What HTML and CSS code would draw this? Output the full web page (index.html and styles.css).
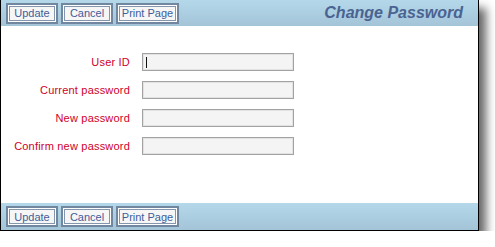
FILE: index.html
```html
<!DOCTYPE html>
<html lang="en">
<head>
  <title>Change Password</title>
  <meta charset="UTF-8">
  <link rel="stylesheet" href="styles.css">
</head>
<body>
<div class="window">
  <div class="bar top">
    <div class="buttons">
      <button class="btn">Update</button>
      <button class="btn">Cancel</button>
      <button class="btn wide">Print Page</button>
    </div>
    <h1 class="title">Change Password</h1>
  </div>

  <form class="form">
    <label class="row">
      <span class="label">User ID</span>
      <input class="field focused" type="text">
    </label>
    <label class="row">
      <span class="label">Current password</span>
      <input class="field" type="password">
    </label>
    <label class="row">
      <span class="label">New password</span>
      <input class="field" type="password">
    </label>
    <label class="row">
      <span class="label">Confirm new password</span>
      <input class="field" type="password">
    </label>
  </form>

  <div class="bar bottom">
    <div class="buttons">
      <button class="btn">Update</button>
      <button class="btn">Cancel</button>
      <button class="btn wide">Print Page</button>
    </div>
  </div>
</div>
</body>
</html>
```

FILE: styles.css
```css
body {
  margin: 0;
  background: #fff;
  font-family: "Liberation Sans", Arial, sans-serif;
}

.window {
  width: 477px;
  height: 230px;
  border: 1px solid #000;
  border-top: none;
  display: flex;
  flex-direction: column;
  background: #fff;
  box-shadow: 7px 8px 9px rgba(0, 0, 0, 0.6);
}

.bar {
  display: flex;
  align-items: center;
  justify-content: space-between;
  background: linear-gradient(#b4d8ea, #a4c4d8);
}

.top {
  height: 26px;
}

.bottom {
  height: 27px;
  margin-top: auto;
}

.buttons {
  display: flex;
  gap: 3px;
  padding-left: 5px;
}

.btn {
  box-sizing: border-box;
  width: 52px;
  height: 21px;
  padding: 0;
  border: 2px solid #71879f;
  box-shadow: inset 0 0 0 1px #fff, inset 0 0 0 2px #8396ac;
  background: #f6f6f6;
  color: #3f5d9b;
  font-family: "Liberation Sans", Arial, sans-serif;
  font-size: 11px;
}

.btn.wide {
  width: 63px;
}

.title {
  margin: 0 15px 0 0;
  font-size: 16px;
  font-style: italic;
  font-weight: bold;
  color: #4a6391;
}

.form {
  display: flex;
  flex-direction: column;
  gap: 10px;
  padding-top: 27px;
}

.row {
  display: flex;
  align-items: center;
  gap: 12px;
}

.label {
  width: 129px;
  text-align: right;
  font-size: 11px;
  letter-spacing: 0.2px;
  color: #d0002a;
}

.field {
  box-sizing: border-box;
  width: 152px;
  height: 18px;
  margin: 0;
  border: 1px solid #a3a3a3;
  box-shadow: inset 0 0 0 1px #e2e2e2;
  background: #f4f4f4;
  outline: none;
  font-size: 11px;
}

/* text caret shown in the first field */
.field.focused {
  background: linear-gradient(#111, #111) 3px 3px / 1px 11px no-repeat, #f4f4f4;
}
```
